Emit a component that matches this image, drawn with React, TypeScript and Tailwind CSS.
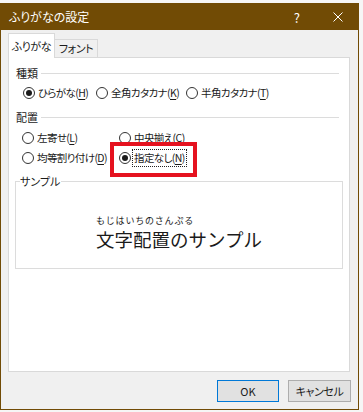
import type { FC } from 'react';

const jp = "font-['Noto_Sans_CJK_JP','Noto_Sans',sans-serif]";

const Radio: FC<{ checked?: boolean }> = ({ checked }) => (
  <span className="flex h-[12px] w-[12px] shrink-0 items-center justify-center rounded-full border border-[#333333] bg-white">
    {checked && <span className="h-[6px] w-[6px] rounded-full bg-[#1a1a1a]" />}
  </span>
);

const Option: FC<{ label: string; keyChar: string; checked?: boolean; focus?: boolean; className?: string }> = ({
  label,
  keyChar,
  checked,
  focus,
  className,
}) => (
  <div className={`flex shrink-0 items-center ${className ?? ''}`}>
    <Radio checked={checked} />
    <span
      className={`ml-[2px] whitespace-nowrap px-[1px] text-[10.5px] leading-[16px] tracking-[-0.6px] ${
        focus ? 'outline outline-1 outline-dotted outline-[#222]' : ''
      }`}
    >
      {label}(<span className="underline underline-offset-2">{keyChar}</span>)
    </span>
  </div>
);

const SectionHeader: FC<{ title: string }> = ({ title }) => (
  <div className="flex h-[16px] items-center pl-[7px] pr-[10px]">
    <span className="leading-[16px]">{title}</span>
    <span className="ml-[3px] h-px flex-1 bg-[#dcdcdc]" />
  </div>
);

export default function App() {
  return (
    <div className="h-[412px] w-[363px] overflow-hidden bg-[#f6f6f6] pt-[3px]">
      <div
        className={`flex h-[407px] w-[359px] flex-col border border-[#714b05] bg-[#f0f0f0] text-[11px] text-[#1b1b1b] ${jp} [font-feature-settings:'palt']`}
      >
        {/* title bar */}
        <div className="flex h-[26px] shrink-0 items-center bg-[#714b05] pl-[8px] text-[12px] text-white">
          <span className="leading-none">ふりがなの設定</span>
          <span className="ml-auto mr-[33px] text-[13px] leading-none">?</span>
          <svg className="mr-[15px]" width="10" height="10" viewBox="0 0 10 10">
            <path d="M0.5 0.5 L9.5 9.5 M9.5 0.5 L0.5 9.5" stroke="white" strokeWidth="1" />
          </svg>
        </div>

        <div className="flex flex-1 flex-col px-[7px] pt-[3px]">
          {/* tabs */}
          <div className="flex h-[24px] items-end">
            <div className="relative z-10 -mb-px flex h-[25px] w-[47px] items-center justify-center border border-b-0 border-[#d9d9d9] bg-white tracking-[-0.4px]">
              ふりがな
            </div>
            <div className="flex h-[18px] w-[43px] items-center justify-center border border-b-0 border-l-0 border-[#d9d9d9] bg-[#f0f0f0] tracking-[-0.4px]">
              フォント
            </div>
          </div>

          {/* tab page */}
          <div className="relative flex h-[315px] w-[342px] flex-col border border-[#d9d9d9] bg-white pt-[7px]">
            <SectionHeader title="種類" />
            <div className="mt-[2px] flex h-[20px] items-center pl-[14px]">
              <Option className="w-[73px]" label="ひらがな" keyChar="H" checked />
              <Option className="w-[90px]" label="全角カタカナ" keyChar="K" />
              <Option label="半角カタカナ" keyChar="T" />
            </div>

            <div className="mt-[6px]">
              <SectionHeader title="配置" />
            </div>
            <div className="mt-[3px] flex h-[20px] items-center pl-[13px]">
              <Option className="w-[97px]" label="左寄せ" keyChar="L" />
              <Option label="中央揃え" keyChar="C" />
            </div>
            <div className="flex h-[20px] items-center pl-[13px]">
              <Option className="w-[97px]" label="均等割り付け" keyChar="D" />
              <Option label="指定なし" keyChar="N" checked focus />
            </div>

            {/* sample group */}
            <div className="relative mx-[6px] mt-[13px] h-[88px] border border-[#dcdcdc]">
              <span className="absolute -top-[9px] left-[4px] bg-white pr-[1px] leading-[16px]">サンプル</span>
              <div className="flex h-full justify-center pt-[34px] [font-feature-settings:normal]">
                <div className="flex flex-col items-start">
                  <span className="text-[9px] leading-[10px] tracking-[0.8px]">もじはいちのさんぷる</span>
                  <span className="text-[18.5px] leading-[26px]">文字配置のサンプル</span>
                </div>
              </div>
            </div>

            {/* annotation */}
            <div className="absolute left-[101px] top-[84px] h-[35px] w-[87px] border-4 border-[#e5121f]" />
          </div>

          {/* buttons */}
          <div className="mt-[8px] flex justify-end gap-[9px]">
            <button className="h-[22px] w-[62px] border border-[#0078d7] bg-[#e1e1e1]">OK</button>
            <button className="h-[22px] w-[63px] border border-[#adadad] bg-[#e1e1e1] tracking-[-0.4px]">キャンセル</button>
          </div>
        </div>
      </div>
    </div>
  );
}
